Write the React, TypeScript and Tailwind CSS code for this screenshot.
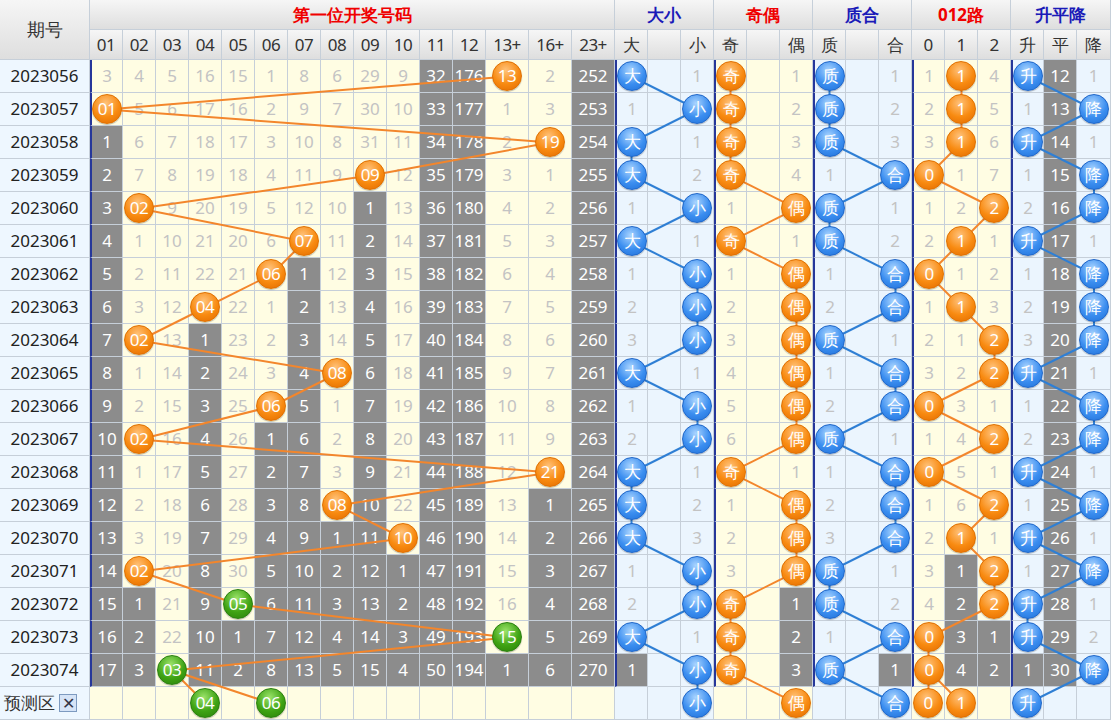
import React from "react";

const LEFT = [
  "3 4 5 16 15 1 8 6 29 9 32 176 *13 2 252",
  "*01 5 6 17 16 2 9 7 30 10 33 177 1 3 253",
  "1 6 7 18 17 3 10 8 31 11 34 178 2 *19 254",
  "2 7 8 19 18 4 11 9 *09 12 35 179 3 1 255",
  "3 *02 9 20 19 5 12 10 1 13 36 180 4 2 256",
  "4 1 10 21 20 6 *07 11 2 14 37 181 5 3 257",
  "5 2 11 22 21 *06 1 12 3 15 38 182 6 4 258",
  "6 3 12 *04 22 1 2 13 4 16 39 183 7 5 259",
  "7 *02 13 1 23 2 3 14 5 17 40 184 8 6 260",
  "8 1 14 2 24 3 4 *08 6 18 41 185 9 7 261",
  "9 2 15 3 25 *06 5 1 7 19 42 186 10 8 262",
  "10 *02 16 4 26 1 6 2 8 20 43 187 11 9 263",
  "11 1 17 5 27 2 7 3 9 21 44 188 12 *21 264",
  "12 2 18 6 28 3 8 *08 10 22 45 189 13 1 265",
  "13 3 19 7 29 4 9 1 11 *10 46 190 14 2 266",
  "14 *02 20 8 30 5 10 2 12 1 47 191 15 3 267",
  "15 1 21 9 *05 6 11 3 13 2 48 192 16 4 268",
  "16 2 22 10 1 7 12 4 14 3 49 193 *15 5 269",
  "17 3 *03 11 2 8 13 5 15 4 50 194 1 6 270",
  ". . . *04 . *06 . . . . . . . . .",
];
const RIGHT = [
  "*大 . 1 *奇 . 1 *质 . 1 1 *1 4 *升 12 1",
  "1 . *小 *奇 . 2 *质 . 2 2 *1 5 1 13 *降",
  "*大 . 1 *奇 . 3 *质 . 3 3 *1 6 *升 14 1",
  "*大 . 2 *奇 . 4 1 . *合 *0 1 7 1 15 *降",
  "1 . *小 1 . *偶 *质 . 1 1 2 *2 2 16 *降",
  "*大 . 1 *奇 . 1 *质 . 2 2 *1 1 *升 17 1",
  "1 . *小 1 . *偶 1 . *合 *0 1 2 1 18 *降",
  "2 . *小 2 . *偶 2 . *合 1 *1 3 2 19 *降",
  "3 . *小 3 . *偶 *质 . 1 2 1 *2 3 20 *降",
  "*大 . 1 4 . *偶 1 . *合 3 2 *2 *升 21 1",
  "1 . *小 5 . *偶 2 . *合 *0 3 1 1 22 *降",
  "2 . *小 6 . *偶 *质 . 1 1 4 *2 2 23 *降",
  "*大 . 1 *奇 . 1 1 . *合 *0 5 1 *升 24 1",
  "*大 . 2 1 . *偶 2 . *合 1 6 *2 1 25 *降",
  "*大 . 3 2 . *偶 3 . *合 2 *1 1 *升 26 1",
  "1 . *小 3 . *偶 *质 . 1 3 1 *2 1 27 *降",
  "2 . *小 *奇 . 1 *质 . 2 4 2 *2 *升 28 1",
  "*大 . 1 *奇 . 2 1 . *合 *0 3 1 *升 29 2",
  "1 . *小 *奇 . 3 *质 . 1 *0 4 2 1 30 *降",
  ". . *小 . . *偶 . . *合 *0 *1 . *升 . .",
];
const ROWS = LEFT.map((l, i) => [...l.split(" "), ...RIGHT[i].split(" ")]);
const IDS = Array.from({ length: 19 }, (_, i) => String(2023056 + i));
const HEAD = ["01","02","03","04","05","06","07","08","09","10","11","12","13+","16+","23+","大","","小","奇","","偶","质","","合","0","1","2","升","平","降"];
const W = [90, ...Array(12).fill(33), 43, 43, 43, ...Array(14).fill(33), 34];
const X: number[] = [];
{ let a = 0; for (const w of W) { X.push(a); a += w; } }
const cx = (c: number) => X[c + 1] + W[c + 1] / 2;
const cy = (r: number) => 60 + r * 33 + 16.5;
const GROUPS: [number, number, string][] = [[0,14,"#f3862c"],[15,17,"#2f7fd4"],[18,20,"#f3862c"],[21,23,"#2f7fd4"],[24,26,"#f3862c"],[27,29,"#2f7fd4"]];
const groupOf = (c: number) => GROUPS.findIndex(g => c >= g[0] && c <= g[1]);
const lastHit = Array.from({ length: 30 }, (_, c) => { let l = -1; for (let r = 0; r < 19; r++) if (ROWS[r][c].startsWith("*")) l = r; return l; });
const SEP = new Set([0, 15, 18, 21, 24, 27]);

const ORANGE = "bg-[radial-gradient(circle_at_45%_30%,#ffc27a,#f88a10_55%,#e06a00)] border border-[#e07000]";
const GREEN = "bg-[radial-gradient(circle_at_45%_30%,#9be36a,#3fa314_55%,#2a7f08)] border border-[#2a8010]";
const BLUE = "bg-[radial-gradient(circle_at_45%_30%,#a9d4ff,#3b8ef0_55%,#1f6fd6)] border border-[#1f66c8]";

function Cell({ r, c }: { r: number; c: number }) {
  const t = ROWS[r][c];
  const g = groupOf(c);
  const blueBg = g === 1 || g === 3 || g === 5;
  const hit = t.startsWith("*");
  const gray = r < 19 && !hit && t !== "." && r > lastHit[c];
  const sep = r < 19 && SEP.has(c) ? "border-l-2 border-l-[#26379a]" : "";
  const bg = gray ? "bg-[#8c8c8c] text-white" : blueBg ? "bg-[#ebf5fe] text-[#c3c3c3]" : "bg-[#fffde3] text-[#c3c3c3]";
  let ball = "";
  if (hit) {
    if (g === 0) ball = r >= 16 ? GREEN : ORANGE;
    else ball = blueBg ? BLUE : ORANGE;
  }
  return (
    <div className={`flex items-center justify-center border-r border-b border-[#c6cfd9] ${bg} ${sep}`}>
      {hit ? (
        <div className={`relative z-20 w-[30px] h-[30px] rounded-full flex items-center justify-center text-white text-[17px] tracking-[-0.5px] shadow-[0_1px_1px_rgba(0,0,0,0.25)] ${ball}`}>{t.slice(1)}</div>
      ) : t === "." ? null : (
        <span>{t}</span>
      )}
    </div>
  );
}

export default function App() {
  const lines: React.ReactNode[] = [];
  GROUPS.forEach(([a, b, col], gi) => {
    for (let r = 0; r < 19; r++) {
      const from = [] as number[], to = [] as number[];
      for (let c = a; c <= b; c++) { if (ROWS[r][c].startsWith("*")) from.push(c); if (ROWS[r + 1][c].startsWith("*")) to.push(c); }
      from.forEach(f => to.forEach(t => lines.push(<line key={`${gi}-${r}-${f}-${t}`} x1={cx(f)} y1={cy(r)} x2={cx(t)} y2={cy(r + 1)} stroke={col} strokeWidth={2} />)));
    }
  });
  const titles: [string, number, number, string][] = [
    ["第一位开奖号码", 2, 17, "text-[#f00000]"], ["大小", 17, 20, "text-[#1a1ab8]"], ["奇偶", 20, 23, "text-[#f00000]"],
    ["质合", 23, 26, "text-[#1a1ab8]"], ["012路", 26, 29, "text-[#f00000]"], ["升平降", 29, 32, "text-[#1a1ab8]"],
  ];
  const hdr = "bg-[linear-gradient(#f6f6f6,#dedede)] border-r border-b border-[#c6cfd9] flex items-center justify-center";
  return (
    <div className="w-[1111px] h-[720px] overflow-hidden bg-white font-['Noto_Sans','Noto_Sans_CJK_SC',sans-serif] text-[17px] text-[#333]">
      <div className="relative grid grid-cols-[90px_repeat(12,33px)_repeat(3,43px)_repeat(14,33px)_34px] grid-rows-[30px_30px_repeat(20,33px)]">
        <div className={`${hdr} row-span-2 col-start-1 row-start-1 text-[18px]`}>期号</div>
        {titles.map(([t, s, e, cl]) => (
          <div key={t} style={{ gridColumnStart: s, gridColumnEnd: e }} className={`${hdr} row-start-1 font-bold text-[17px] ${cl}`}>{t}</div>
        ))}
        {HEAD.map((h, i) => (
          <div key={i} className={`${hdr} row-start-2 text-[17px] tracking-[-0.5px]`}>{h}</div>
        ))}
        {ROWS.map((row, r) => (
          <React.Fragment key={r}>
            {r < 19 ? (
              <div className="bg-[#eef7ff] border-r border-b border-[#c6cfd9] flex items-center justify-center text-[#222] text-[17px]">{IDS[r]}</div>
            ) : (
              <div className="bg-[#eef7ff] border-r border-b border-[#c6cfd9] flex items-center gap-1 pl-1 text-[#333] text-[17px]">
                预测区
                <span className="w-[18px] h-[18px] border border-[#7d9ac0] bg-[#d6e4f7] flex items-center justify-center text-[16px] leading-none text-[#334]">✕</span>
              </div>
            )}
            {row.map((_, c) => <Cell key={c} r={r} c={c} />)}
          </React.Fragment>
        ))}
        <svg className="absolute inset-0 z-10 pointer-events-none" width={1111} height={720}>{lines}</svg>
      </div>
    </div>
  );
}
